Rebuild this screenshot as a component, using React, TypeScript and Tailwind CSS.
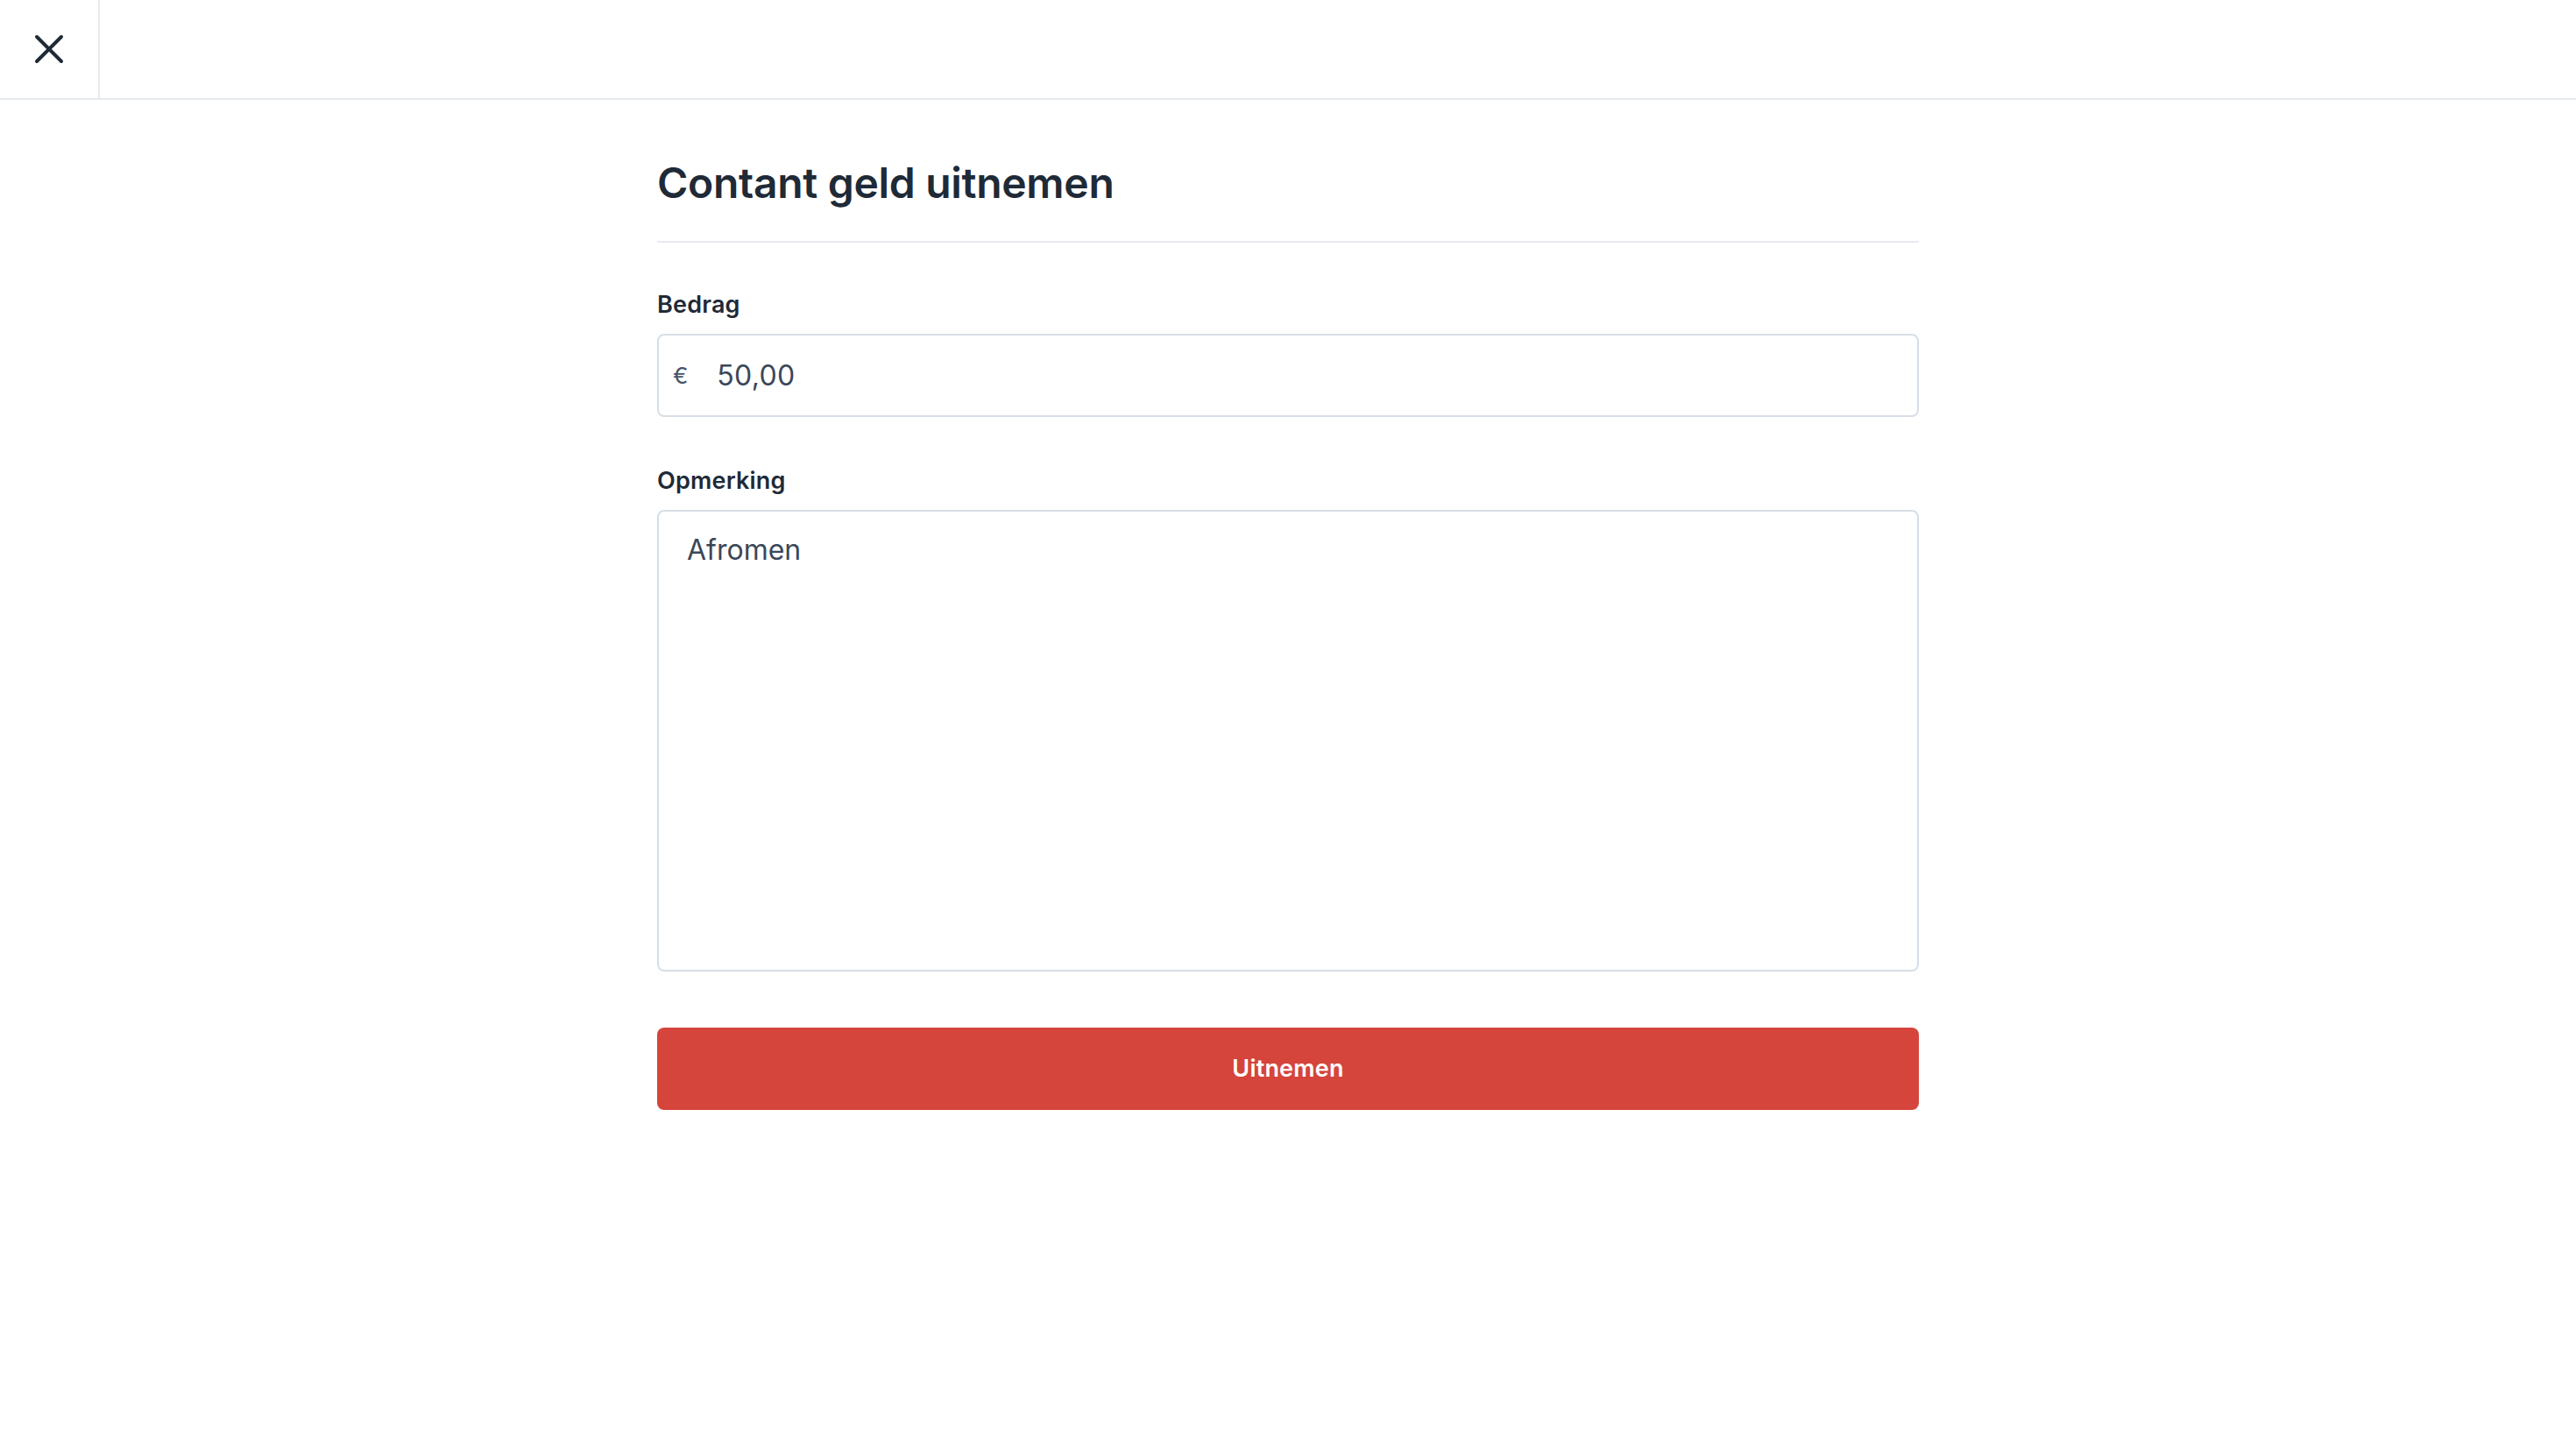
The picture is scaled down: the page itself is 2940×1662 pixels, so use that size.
import React from 'react';

function CloseIcon() {
    return (
        <svg width="34" height="34" viewBox="0 0 34 34" fill="none" aria-hidden="true">
            <path d="M3 3L31 31M31 3L3 31" stroke="#1f2a37" strokeWidth="4" strokeLinecap="round" />
        </svg>
    );
}

export default function App() {
    return (
        <div className="min-h-screen bg-white text-[#1f2a37]" style={{ fontFamily: 'Inter, "Liberation Sans", sans-serif' }}>
            {/* Top bar */}
            <header className="flex h-[114px] border-b-2 border-[#e6eaef]">
                <button
                    className="flex h-[112px] w-[114px] items-center justify-center border-r-2 border-[#e6eaef]"
                    aria-label="Sluiten"
                >
                    <CloseIcon />
                </button>
            </header>

            {/* Form */}
            <main className="mx-auto w-[1440px] pt-[66px]">
                <h1 className="border-b-2 border-[#e6eaef] pb-[37px] text-[48px] leading-[58px] font-semibold tracking-[-0.3px]">
                    Contant geld uitnemen
                </h1>

                <div className="mt-[55px]">
                    <label className="block text-[27px] leading-[32px] font-semibold tracking-[0.2px]">Bedrag</label>
                    <div className="mt-[17px] flex h-[95px] items-center rounded-[8px] border-2 border-[#d7dee6] px-[16px]">
                        <span className="text-[26px] text-[#475467]">€</span>
                        <input
                            className="ml-[33px] w-full bg-transparent text-[32px] tracking-[0.3px] text-[#3b4758] outline-none"
                            defaultValue="50,00"
                            readOnly
                        />
                    </div>
                </div>

                <div className="mt-[57px]">
                    <label className="block text-[27px] leading-[32px] font-semibold tracking-[0.2px]">Opmerking</label>
                    <textarea
                        className="mt-[17px] block h-[527px] w-full resize-none rounded-[8px] border-2 border-[#d7dee6] px-[32px] pt-[20px] text-[32px] leading-[48px] text-[#3b4758] outline-none"
                        defaultValue="Afromen"
                        readOnly
                    />
                </div>

                <button className="mt-[64px] flex h-[94px] w-full items-center justify-center rounded-[8px] bg-[#d5453b] text-[27px] font-semibold tracking-[0.2px] text-white">
                    Uitnemen
                </button>
            </main>
        </div>
    );
}
